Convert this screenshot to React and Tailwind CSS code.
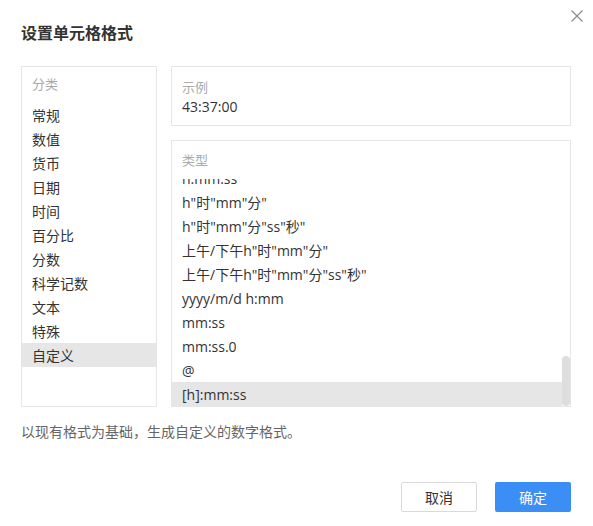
import React from "react";

const categories = ["常规", "数值", "货币", "日期", "时间", "百分比", "分数", "科学记数", "文本", "特殊", "自定义"];
const types = [
  "h:mm:ss",
  'h"时"mm"分"',
  'h"时"mm"分"ss"秒"',
  '上午/下午h"时"mm"分"',
  '上午/下午h"时"mm"分"ss"秒"',
  "yyyy/m/d h:mm",
  "mm:ss",
  "mm:ss.0",
  "@",
  "[h]:mm:ss",
];

export default function App() {
  return (
    <div className="relative w-[593px] h-[526px] bg-white text-[#333] font-['Open_Sans','Noto_Sans_CJK_SC',sans-serif]">
      <button className="absolute right-[10px] top-[10px] w-[12px] h-[12px] flex items-center justify-center">
        <svg width="12" height="12" viewBox="0 0 12 12" fill="none" stroke="#8a8a8a" strokeWidth="1.2">
          <path d="M0.5 0.5 L11.5 11.5 M11.5 0.5 L0.5 11.5" />
        </svg>
      </button>

      <div className="pt-[24px] pl-[21px] pr-[22px]">
        <h1 className="text-[16px] leading-[18px] font-bold text-[#333]">设置单元格格式</h1>

        <div className="mt-[24px] flex gap-[14px]">
          {/* left panel */}
          <div className="w-[136px] h-[341px] border border-[#e6e6e6] flex flex-col">
            <div className="h-[36px] pl-[10px] flex items-center text-[13px] text-[#aaa]">分类</div>
            {categories.map((c) => (
              <div
                key={c}
                className={
                  c === "自定义"
                    ? "h-6 pl-[10px] flex items-center text-[14px] bg-[#e6e6e6]"
                    : "h-6 pl-[10px] flex items-center text-[14px]"
                }
              >
                {c}
              </div>
            ))}
          </div>

          {/* right column */}
          <div className="w-[400px] flex flex-col gap-[14px]">
            <div className="h-[60px] border border-[#e6e6e6] pt-[10px] pl-[10px]">
              <div className="text-[13px] leading-[20px] text-[#aaa]">示例</div>
              <div className="text-[14px] leading-[20px]">43:37:00</div>
            </div>

            <div className="h-[267px] border border-[#e6e6e6] flex flex-col">
              <div className="h-[38px] pt-[9px] pl-[10px] text-[13px] leading-[20px] text-[#aaa]">类型</div>
              <div className="flex-1 flex overflow-hidden">
                <div className="flex-1 overflow-hidden">
                  <div className="-mt-[13px]">
                    {types.map((t) => (
                      <div
                        key={t}
                        className={
                          t === "[h]:mm:ss"
                            ? "h-6 pl-[10px] flex items-center text-[14px] whitespace-nowrap bg-[#e6e6e6]"
                            : "h-6 pl-[10px] flex items-center text-[14px] whitespace-nowrap"
                        }
                      >
                        {t}
                      </div>
                    ))}
                  </div>
                </div>
                <div className="w-[8px] flex flex-col justify-end">
                  <div className="h-[50px] w-[8px] rounded-full bg-[#dedede]" />
                </div>
              </div>
            </div>
          </div>
        </div>

        <div className="mt-[15px] text-[14px] leading-[20px] text-[#666]">以现有格式为基础，生成自定义的数字格式。</div>

        <div className="mt-[40px] flex justify-end gap-[18px]">
          <button className="w-[76px] h-[30px] border border-[#d9d9d9] rounded-[2px] bg-white text-[14px] text-[#333]">取消</button>
          <button className="w-[76px] h-[30px] rounded-[2px] bg-[#3a8ef6] text-[14px] text-white">确定</button>
        </div>
      </div>
    </div>
  );
}
